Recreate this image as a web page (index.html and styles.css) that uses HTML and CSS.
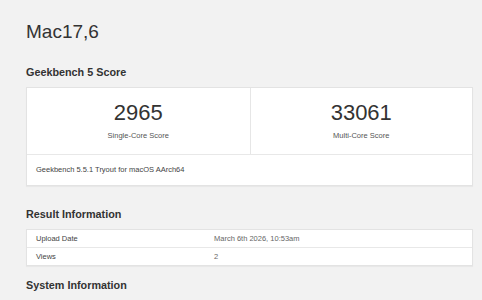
FILE: index.html
```html
<!DOCTYPE html>
<html>
<head>
<meta charset="utf-8">
<link rel="stylesheet" href="styles.css">
</head>
<body>
<div class="page">
  <h1 class="title">Mac17,6</h1>

  <h2 class="section-title">Geekbench 5 Score</h2>
  <div class="card score-card">
    <div class="scores">
      <div class="score">
        <div class="score-value">2965</div>
        <div class="score-label">Single-Core Score</div>
      </div>
      <div class="score">
        <div class="score-value">33061</div>
        <div class="score-label">Multi-Core Score</div>
      </div>
    </div>
    <div class="score-footer">Geekbench 5.5.1 Tryout for macOS AArch64</div>
  </div>

  <h2 class="section-title">Result Information</h2>
  <div class="card info-table">
    <div class="row">
      <div class="cell label">Upload Date</div>
      <div class="cell value">March 6th 2026, 10:53am</div>
    </div>
    <div class="row">
      <div class="cell label">Views</div>
      <div class="cell value">2</div>
    </div>
  </div>

  <h2 class="section-title">System Information</h2>
</div>
</body>
</html>
```
FILE: styles.css
```css
html, body {
  margin: 0;
  padding: 0;
}
body {
  background: #f2f2f2;
  font-family: "Liberation Sans", Arial, sans-serif;
  color: #333;
  overflow: hidden;
}
.page {
  padding: 20px 9px 0 26px;
}
.title {
  margin: 0;
  font-size: 19px;
  line-height: 24px;
  font-weight: normal;
  color: #333;
}
.section-title {
  margin: 21px 0 8px;
  font-size: 10.8px;
  line-height: 14px;
  font-weight: bold;
  color: #333;
}
.card {
  background: #fff;
  border: 1px solid #e3e3e3;
  box-shadow: 0 1px 1px rgba(0,0,0,0.04);
}
.score-card {
  margin-bottom: 21px;
}
.scores {
  display: grid;
  grid-template-columns: 1fr 1fr;
}
.score {
  text-align: center;
  padding: 12px 0 13px;
}
.score + .score {
  border-left: 1px solid #e6e6e6;
}
.score-value {
  font-size: 22px;
  line-height: 26px;
  color: #333;
}
.score-label {
  margin-top: 5px;
  font-size: 7.5px;
  line-height: 10px;
  color: #555;
}
.score-footer {
  border-top: 1px solid #e8e8e8;
  padding: 10px 9px 11px;
  font-size: 7.5px;
  line-height: 9px;
  color: #444;
}
.info-table {
  margin-bottom: 12px;
}
.info-table + .section-title {
  margin-top: 12px;
}
.row {
  display: grid;
  grid-template-columns: 40% 60%;
}
.row + .row {
  border-top: 1px solid #e8e8e8;
}
.cell {
  padding: 4px 9px;
  font-size: 7.5px;
  line-height: 9px;
}
.label {
  color: #444;
}
.value {
  color: #666;
}
```
